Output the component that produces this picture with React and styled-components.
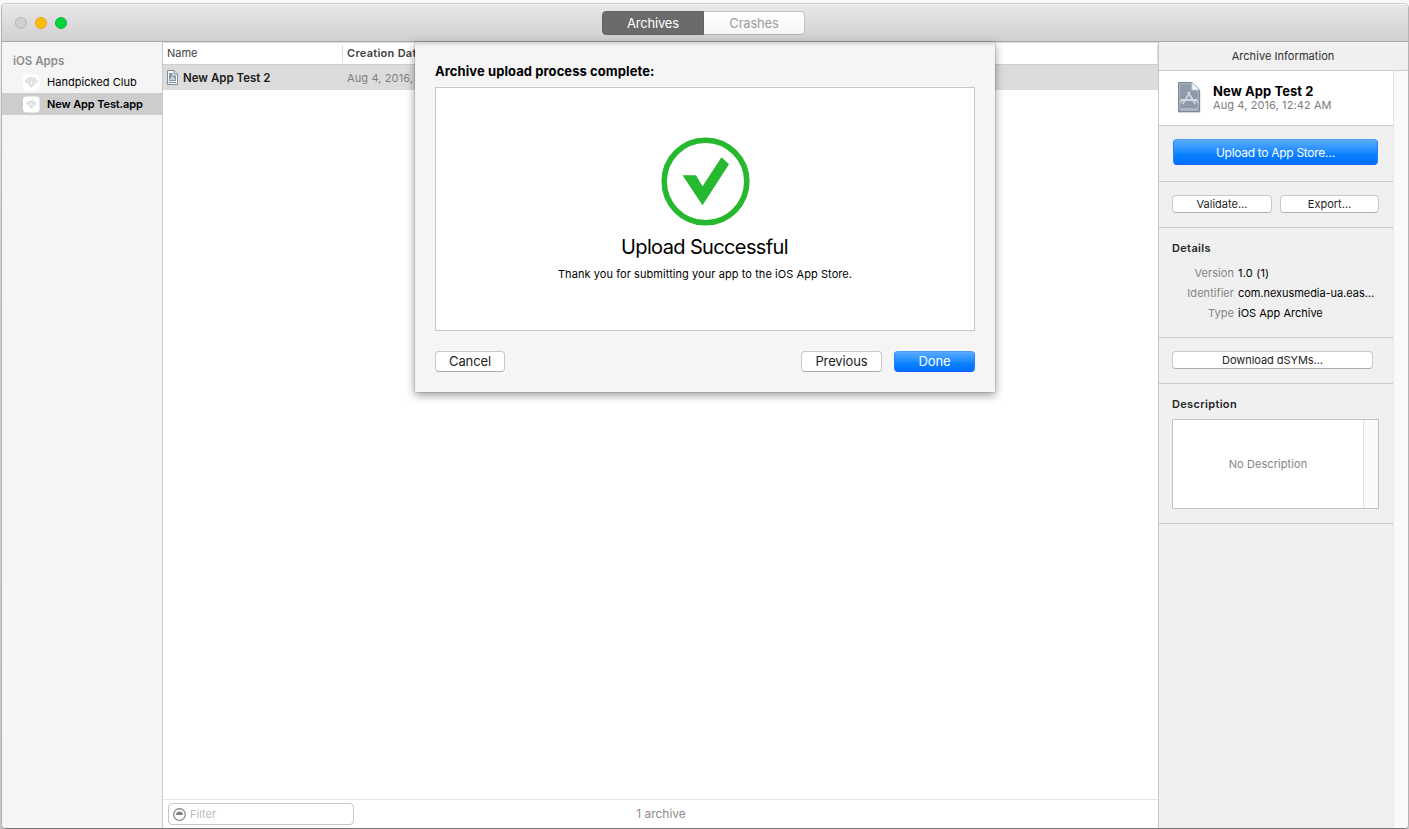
import React from "react";
import styled, { createGlobalStyle, css } from "styled-components";

const Global = createGlobalStyle`
  * { box-sizing: border-box; }
  body { margin: 0; background: #f7f7f7; font-family: Inter, "Liberation Sans", sans-serif; font-size: 11px; color: #000; overflow: hidden; }
  button { font-family: inherit; }
  svg { display: block; flex: none; }
`;

const Desktop = styled.div`
  height: 829px;
  padding: 3px 0 0 1px;
  background: linear-gradient(#f8f8f8, #d0d0d0 30%, #c4c4c4);
`;

const Window = styled.div`
  position: relative;
  display: flex;
  flex-direction: column;
  width: 1408px;
  height: 826px;
  border: 1px solid #b4b4b4;
  border-top-color: #cfcfcf;
  border-bottom-color: #757575;
  border-radius: 5px;
  overflow: hidden;
  background: #fff;
`;

const Toolbar = styled.header`
  display: grid;
  grid-template-columns: 600px 203px 1fr;
  align-items: center;
  flex: none;
  height: 38px;
  border-bottom: 1px solid #a9a7a9;
  background: linear-gradient(#e9e7e9, #d1cfd1);
  box-shadow: inset 0 1px #f4f3f4;
`;

const Lights = styled.div`
  display: flex;
  gap: 8px;
  padding-left: 13px;
`;

const Light = styled.span`
  width: 12px;
  height: 12px;
  border-radius: 50%;
  background: ${(p) => p.$fill};
  border: 1px solid ${(p) => p.$edge};
`;

const Segments = styled.div`
  display: flex;
  height: 24px;
`;

const Segment = styled.button`
  width: ${(p) => (p.$active ? 102 : 101)}px;
  padding: 0;
  font-size: 13px;
  letter-spacing: -0.2px;
  border: 1px solid #c4c2c4;
  border-left: 0;
  border-bottom-color: #b4b2b4;
  border-radius: 0 4px 4px 0;
  background: linear-gradient(#fff, #f6f6f6);
  color: #9d9d9d;
  ${(p) => p.$active && css`
    border: 1px solid #626262;
    border-radius: 4px 0 0 4px;
    background: #6b6b6b;
    color: #fff;
  `}
`;

const Body = styled.div`
  display: flex;
  flex: 1;
  min-height: 0;
`;

const Sidebar = styled.nav`
  width: 161px;
  flex: none;
  padding-top: 9px;
  background: #f5f5f5;
  border-right: 1px solid #c9c9c9;
`;

const SidebarTitle = styled.div`
  height: 20px;
  padding-left: 11px;
  font-size: 11.5px;
  line-height: 20px;
  font-weight: 600;
  color: #8c8c8c;
`;

const SidebarItem = styled.div`
  display: flex;
  align-items: center;
  gap: 7px;
  height: 22px;
  padding-left: 21px;
  font-weight: ${(p) => (p.$active ? 600 : 400)};
  letter-spacing: ${(p) => p.$ls || 0}px;
  background: ${(p) => (p.$active ? "#cdcdcd" : "transparent")};
`;

const Main = styled.main`
  display: flex;
  flex-direction: column;
  flex: 1;
  border-top: 1px solid #dedede;
`;

const Columns = styled.div`
  display: flex;
  align-items: center;
  height: 22px;
  border-bottom: 1px solid #cfcfcf;
  color: #404040;
`;

const Column = styled.div`
  width: ${(p) => p.$width}px;
  height: 18px;
  line-height: 17px;
  padding-left: 4px;
  border-right: 1px solid #dcdcdc;
  font-weight: ${(p) => (p.$sorted ? 600 : 400)};
  letter-spacing: ${(p) => p.$ls || 0}px;
`;

const ArchiveRow = styled.div`
  display: flex;
  align-items: center;
  height: 25px;
  background: #dcdcdc;
`;

const ArchiveName = styled.div`
  display: flex;
  align-items: center;
  gap: 5px;
  width: 180px;
  padding-left: 4px;
  font-size: 11.5px;
  font-weight: 600;
  color: #1c1c1c;
`;

const ArchiveDate = styled.div`
  padding-left: 4px;
  color: #808080;
  letter-spacing: 0.12px;
`;

const Blank = styled.div`
  flex: 1;
`;

const Footer = styled.footer`
  display: grid;
  grid-template-columns: 186px 1fr 186px;
  align-items: center;
  height: 29px;
  padding: 0 5px;
  border-top: 1px solid #e6e6e6;
`;

const FilterField = styled.div`
  display: flex;
  align-items: center;
  gap: 4px;
  height: 22px;
  padding-left: 4px;
  border: 1px solid #c6c6c6;
  border-radius: 4px;
  color: #bcbcbc;
`;

const Count = styled.div`
  padding: 0 0 2px 1px;
  text-align: center;
  font-size: 12px;
  color: #8c8c8c;
`;

const Inspector = styled.aside`
  display: flex;
  flex-direction: column;
  width: 250px;
  flex: none;
  border-left: 1px solid #c6c6c6;
  background: #f0f0f0;
`;

const InspectorTitle = styled.div`
  height: 29px;
  line-height: 29px;
  padding-right: 1px;
  text-align: center;
  color: #2e2e2e;
  letter-spacing: 0.05px;
  border-bottom: 1px solid #cdcdcd;
`;

const InspectorScroll = styled.div`
  display: flex;
  flex: 1;
`;

const InspectorContent = styled.div`
  width: 234px;
`;

const ScrollTrack = styled.div`
  flex: 1;
  background: #fafafa;
  border-left: 1px solid #e6e6e6;
`;

const Section = styled.section`
  height: ${(p) => p.$height}px;
  padding: ${(p) => p.$pad};
  border-bottom: 1px solid #cacaca;
`;

const Summary = styled(Section)`
  display: flex;
  gap: 12px;
  background: #fff;
`;

const SummaryText = styled.div`
  padding-top: 2px;
`;

const SummaryName = styled.div`
  font-size: 13px;
  line-height: 15px;
  font-weight: 700;
  letter-spacing: 0.08px;
`;

const SummaryDate = styled.div`
  line-height: 13px;
  color: #7d7d7d;
  letter-spacing: 0.1px;
`;

const Push = styled.button`
  display: block;
  width: ${(p) => p.$width}px;
  height: ${(p) => p.$height}px;
  padding: ${(p) => (p.$drop ? "1px 0 0" : 0)};
  font-size: ${(p) => p.$size || 11}px;
  letter-spacing: ${(p) => p.$ls || 0}px;
  line-height: 1;
  color: #1e1e1e;
  background: #fff;
  border: 1px solid #c8c8c8;
  border-bottom-color: #acacac;
  border-radius: 4px;
  ${(p) => p.$primary && css`
    color: #fff;
    background: linear-gradient(#5aabff, #1d8bff 50%, #0a80ff 60%, #006fff);
    border-color: #4a9cf8 #2a7ffa #1260ff;
  `}
`;

const Pair = styled.div`
  display: flex;
  gap: 8px;
`;

const Heading = styled.h2`
  margin: 0;
  font-size: 11px;
  line-height: 14px;
  font-weight: 600;
  color: #262626;
  letter-spacing: 0.33px;
`;

const Facts = styled.dl`
  display: grid;
  grid-template-columns: 62px 1fr;
  column-gap: 4px;
  grid-auto-rows: 20px;
  margin: 8px 0 0;
  line-height: 20px;
`;

const Term = styled.dt`
  text-align: right;
  color: #858585;
  letter-spacing: 0.05px;
`;

const Fact = styled.dd`
  margin: 0;
  white-space: nowrap;
  letter-spacing: ${(p) => p.$ls || 0}px;
`;

const DescriptionBox = styled.div`
  display: flex;
  width: 207px;
  height: 90px;
  margin-top: 8px;
  border: 1px solid #c2c2c2;
  background: #fff;
`;

const Placeholder = styled.div`
  flex: 1;
  line-height: 88px;
  text-align: center;
  color: #858585;
  letter-spacing: 0.07px;
`;

const InnerTrack = styled.div`
  width: 15px;
  background: #fafafa;
  border-left: 1px solid #e4e4e4;
`;

const Sheet = styled.div`
  position: absolute;
  left: 413px;
  top: 38px;
  width: 580px;
  height: 350px;
  padding: 21px 20px 0;
  background: #f5f5f5;
  box-shadow: inset 0 4px 4px -3px rgba(0,0,0,.22), 0 0 1px rgba(0,0,0,.5), 0 3px 9px rgba(0,0,0,.42);
`;

const SheetTitle = styled.h1`
  margin: 0 0 8px;
  font-size: 13px;
  line-height: 16px;
  font-weight: 700;
  letter-spacing: 0.08px;
`;

const Result = styled.div`
  display: flex;
  flex-direction: column;
  align-items: center;
  height: 244px;
  padding-top: 49px;
  border: 1px solid #c6c6c6;
  background: #fff;
`;

const ResultTitle = styled.div`
  margin: 8px 1px 0 0;
  font-size: 20px;
  line-height: 24px;
  letter-spacing: -0.63px;
`;

const ResultNote = styled.div`
  margin-top: 8px;
  line-height: 14px;
  letter-spacing: 0.07px;
`;

const Actions = styled.div`
  display: grid;
  grid-template-columns: 70px 1fr 81px 81px;
  column-gap: 12px;
  margin-top: 20px;
`;

const PreviousSlot = styled.div`
  grid-column: 3;
`;

const AppIcon = ({ small }) => (
  <svg width="17" height="17" viewBox="0 0 17 17">
    <rect x="0" y="0.5" width="16.500" height="16" rx="3.500" fill="#fff" />
    <g strokeLinejoin="round" stroke="#cfcfcf" transform={small ? "translate(2 2) scale(.76)" : undefined}>
      <path d="M5 4h6.600l3 3.200L8.300 13 2 7.200z" fill="#f1f1f1" strokeWidth={small ? 1 : 0.8} />
      <path d="M2 7.200h12.600M5 4l1 3.200L8.300 13l2.300-5.800 1-3.200M6 7.200L8.300 4l2.300 3.200" fill="none" strokeWidth=".6" />
    </g>
  </svg>
);

const SmallDoc = () => (
  <svg width="11" height="15" viewBox="0 0 11 15">
    <path d="M.5.5h6.500l3.500 3.500v10.500H.5z" fill="#f4f7fa" stroke="#7e8c9b" />
    <path d="M7 .5V4h3.500" fill="#dbe2e9" stroke="#7e8c9b" />
    <path d="M2 3h3.500v2.500H9V11H2z" fill="#8797a8" />
    <path d="M3.500 10l2-3.500 2 3.500M3.300 9h4.400" stroke="#e9eef3" fill="none" strokeWidth=".9" />
    <path d="M2 12.500h7" stroke="#7e8c9b" />
  </svg>
);

const LargeDoc = () => (
  <svg width="24" height="32" viewBox="0 0 24 32">
    <path d="M1 2h15l7.500 7V31H1z" fill="#d3d7db" />
    <path d="M1.500 .5h13.500l7.500 7.500v21.500h-21z" fill="#8c9aa9" stroke="#7c8896" />
    <path d="M2.700 1.800h12v6.500h6.600V26.500h-18.600z" fill="none" stroke="#bcc6cf" strokeWidth=".7" />
    <path d="M15 .5v7.500h7.500z" fill="#f4f6f7" stroke="#b5bec8" strokeWidth=".6" />
    <path d="M2.500 28h19" stroke="#dbe1e7" strokeWidth=".8" />
    <g fill="none" stroke="#e8edf2" strokeLinecap="round">
      <path d="M12.800 10.500L6 21.500M11.200 10.500l6.800 11" strokeWidth="1.500" />
      <path d="M4.500 18h15" strokeWidth="1.600" />
      <path d="M12.800 10.500L6 21.500M11.200 10.500l6.800 11" stroke="#8c9aa9" strokeWidth=".4" />
      <path d="M4.500 18l-1 2.500M19.500 18l1 2.500" strokeWidth="1" />
    </g>
  </svg>
);

const FilterIcon = () => (
  <svg width="13" height="13" viewBox="0 0 13 13">
    <circle cx="6.500" cy="6.500" r="5.800" fill="none" stroke="#808080" strokeWidth="1.200" />
    <path d="M3 7a3.500 3.500 0 0 1 7 0z" fill="#808080" />
  </svg>
);

const SuccessMark = () => (
  <svg width="90" height="90" viewBox="0 0 90 90">
    <circle cx="45.500" cy="44.500" r="41.300" fill="none" stroke="#26b82f" strokeWidth="5.600" />
    <path d="M22.500 38.300h13.500L42.500 49.300l19-29 7.500 7L42.500 68.300z" fill="#26b82f" />
  </svg>
);

export default function App() {
  return (
    <Desktop>
      <Global />
      <Window>
        <Toolbar>
          <Lights>
            <Light $fill="#cfcfcf" $edge="#b9b9b9" />
            <Light $fill="#ffbd0a" $edge="#e2a416" />
            <Light $fill="#00d43c" $edge="#0eb93a" />
          </Lights>
          <Segments>
            <Segment $active>Archives</Segment>
            <Segment>Crashes</Segment>
          </Segments>
        </Toolbar>
        <Body>
          <Sidebar>
            <SidebarTitle>iOS Apps</SidebarTitle>
            <SidebarItem $ls={0.03}><AppIcon />Handpicked Club</SidebarItem>
            <SidebarItem $active $ls={-0.12}><AppIcon small />New App Test.app</SidebarItem>
          </Sidebar>
          <Main>
            <Columns>
              <Column $width={180}>Name</Column>
              <Column $width={815} $sorted $ls={0.28}>Creation Dat</Column>
            </Columns>
            <ArchiveRow>
              <ArchiveName><SmallDoc />New App Test 2</ArchiveName>
              <ArchiveDate>Aug 4, 2016,</ArchiveDate>
            </ArchiveRow>
            <Blank />
            <Footer>
              <FilterField><FilterIcon />Filter</FilterField>
              <Count>1 archive</Count>
            </Footer>
          </Main>
          <Inspector>
            <InspectorTitle>Archive Information</InspectorTitle>
            <InspectorScroll>
              <InspectorContent>
                <Summary $height={55} $pad="11px 0 0 18px">
                  <LargeDoc />
                  <SummaryText>
                    <SummaryName>New App Test 2</SummaryName>
                    <SummaryDate>Aug 4, 2016, 12:42 AM</SummaryDate>
                  </SummaryText>
                </Summary>
                <Section $height={56} $pad="13px 0 0 14px">
                  <Push $primary $drop $width={205} $height={26} $size={12} $ls={-0.3}>Upload to App Store…</Push>
                </Section>
                <Section $height={46} $pad="13px 0 0 13px">
                  <Pair>
                    <Push $width={100} $height={18}>Validate…</Push>
                    <Push $width={99} $height={18}>Export…</Push>
                  </Pair>
                </Section>
                <Section $height={110} $pad="13px 0 0 13px">
                  <Heading>Details</Heading>
                  <Facts>
                    <Term>Version</Term><Fact $ls={0.2}>1.0 (1)</Fact>
                    <Term>Identifier</Term><Fact $ls={-0.05}>com.nexusmedia-ua.eas…</Fact>
                    <Term>Type</Term><Fact>iOS App Archive</Fact>
                  </Facts>
                </Section>
                <Section $height={46} $pad="13px 0 0 13px">
                  <Push $width={201} $height={18} $ls={-0.05}>Download dSYMs…</Push>
                </Section>
                <Section $height={140} $pad="13px 0 0 13px">
                  <Heading>Description</Heading>
                  <DescriptionBox>
                    <Placeholder>No Description</Placeholder>
                    <InnerTrack />
                  </DescriptionBox>
                </Section>
              </InspectorContent>
              <ScrollTrack />
            </InspectorScroll>
          </Inspector>
        </Body>
        <Sheet>
          <SheetTitle>Archive upload process complete:</SheetTitle>
          <Result>
            <SuccessMark />
            <ResultTitle>Upload Successful</ResultTitle>
            <ResultNote>Thank you for submitting your app to the iOS App Store.</ResultNote>
          </Result>
          <Actions>
            <Push $width={70} $height={21} $size={13} $ls={-0.1}>Cancel</Push>
            <PreviousSlot><Push $width={81} $height={21} $size={13} $ls={-0.12}>Previous</Push></PreviousSlot>
            <Push $primary $width={81} $height={21} $size={13} $ls={-0.1}>Done</Push>
          </Actions>
        </Sheet>
      </Window>
    </Desktop>
  );
}
